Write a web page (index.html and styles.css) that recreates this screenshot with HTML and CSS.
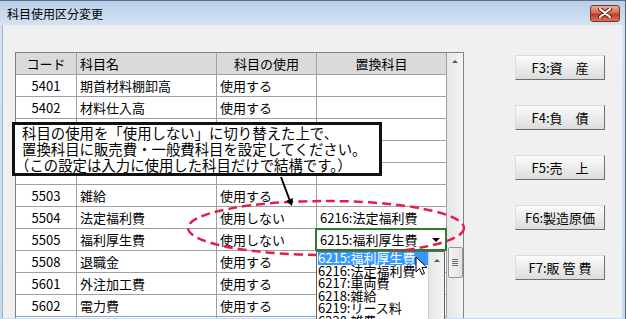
FILE: index.html
```html
<!DOCTYPE html>
<html lang="ja">

<head>
    <meta charset="UTF-8">
    <meta name="viewport" content="width=device-width, initial-scale=1.0">
    <title>科目使用区分変更</title>
    <link rel="stylesheet" href="styles.css">
</head>

<body>
    <div class="window">
        <div class="titlebar">
            <span class="title">科目使用区分変更</span>
            <div class="close-btn">
                <svg width="14" height="10" viewBox="0 0 14 10">
                    <path d="M2 1 L12 9 M12 1 L2 9" stroke="#5a1c12" stroke-width="4" stroke-linecap="round" />
                    <path d="M2 1 L12 9 M12 1 L2 9" stroke="#fff" stroke-width="2.2" stroke-linecap="round" />
                </svg>
            </div>
        </div>

        <div class="client">
            <div class="grid">
                <div class="grid-body">
                    <div class="row head">
                        <div class="cell center">コード</div>
                        <div class="cell">科目名</div>
                        <div class="cell center">科目の使用</div>
                        <div class="cell center">置換科目</div>
                    </div>
                    <div class="row">
                        <div class="cell center">5401</div>
                        <div class="cell">期首材料棚卸高</div>
                        <div class="cell">使用する</div>
                        <div class="cell"></div>
                    </div>
                    <div class="row">
                        <div class="cell center">5402</div>
                        <div class="cell">材料仕入高</div>
                        <div class="cell">使用する</div>
                        <div class="cell"></div>
                    </div>
                    <!-- 吹き出しの下に隠れる行 -->
                    <div class="row">
                        <div class="cell"></div>
                        <div class="cell"></div>
                        <div class="cell"></div>
                        <div class="cell"></div>
                    </div>
                    <div class="row">
                        <div class="cell"></div>
                        <div class="cell"></div>
                        <div class="cell"></div>
                        <div class="cell"></div>
                    </div>
                    <div class="row">
                        <div class="cell"></div>
                        <div class="cell"></div>
                        <div class="cell"></div>
                        <div class="cell"></div>
                    </div>
                    <div class="row">
                        <div class="cell center">5503</div>
                        <div class="cell">雑給</div>
                        <div class="cell">使用する</div>
                        <div class="cell"></div>
                    </div>
                    <div class="row">
                        <div class="cell center">5504</div>
                        <div class="cell">法定福利費</div>
                        <div class="cell">使用しない</div>
                        <div class="cell">6216:法定福利費</div>
                    </div>
                    <div class="row">
                        <div class="cell center">5505</div>
                        <div class="cell">福利厚生費</div>
                        <div class="cell">使用しない</div>
                        <div class="cell edit-cell">
                            <div class="combo">
                                <span class="combo-text">6215:福利厚生費</span>
                                <span class="combo-btn"><span class="tri-down"></span></span>
                            </div>
                        </div>
                    </div>
                    <div class="row">
                        <div class="cell center">5508</div>
                        <div class="cell">退職金</div>
                        <div class="cell">使用する</div>
                        <div class="cell"></div>
                    </div>
                    <div class="row">
                        <div class="cell center">5601</div>
                        <div class="cell">外注加工費</div>
                        <div class="cell">使用する</div>
                        <div class="cell"></div>
                    </div>
                    <div class="row">
                        <div class="cell center">5602</div>
                        <div class="cell">電力費</div>
                        <div class="cell">使用する</div>
                        <div class="cell"></div>
                    </div>
                    <div class="row last">
                        <div class="cell"></div>
                        <div class="cell"></div>
                        <div class="cell"></div>
                        <div class="cell"></div>
                    </div>
                </div>

                <div class="vscroll">
                    <div class="scroll-arrow"><span class="tri-up"></span></div>
                    <div class="thumb">
                        <span></span><span></span><span></span><span></span>
                    </div>
                </div>
            </div>

            <div class="fkeys">
                <div class="fkey">F3:資　産</div>
                <div class="fkey">F4:負　債</div>
                <div class="fkey">F5:売　上</div>
                <div class="fkey">F6:製造原価</div>
                <div class="fkey">F7:販 管 費</div>
            </div>
        </div>

        <!-- 説明の吹き出し -->
        <div class="callout">
            <div>科目の使用を「使用しない」に切り替えた上で、</div>
            <div>置換科目に販売費・一般費科目を設定してください。</div>
            <div class="paren">（この設定は入力に使用した科目だけで結構です。）</div>
        </div>

        <svg class="marks" width="626" height="319" viewBox="0 0 626 319">
            <ellipse cx="326" cy="227" rx="138" ry="27" fill="none" stroke="#e41e4c" stroke-width="2.5"
                stroke-dasharray="9 5" />
            <line x1="281" y1="176" x2="290" y2="200" stroke="#000" stroke-width="2" />
            <polygon points="292,205 293,197 286,200" fill="#000" />
        </svg>

        <!-- ドロップダウン -->
        <div class="droplist">
            <ul class="items">
                <li class="selected">6215:福利厚生費</li>
                <li>6216:法定福利費</li>
                <li>6217:車両費</li>
                <li>6218:雑給</li>
                <li>6219:リース料</li>
                <li>6220:雑費</li>
            </ul>
            <div class="list-scroll"><span class="tri-up"></span></div>
        </div>

        <svg class="cursor" width="13" height="21" viewBox="0 0 13 21">
            <path d="M1 1 L1 16 L4.5 12.5 L7 18.5 L9.5 17.5 L7 11.5 L12 11.5 Z" fill="#fff" stroke="#000"
                stroke-width="1" stroke-linejoin="round" />
        </svg>
    </div>
</body>

</html>
```

FILE: styles.css
```css
* {
    box-sizing: border-box;
}

body {
    margin: 0;
    width: 626px;
    height: 319px;
    overflow: hidden;
    font-family: "Noto Sans CJK JP", "Noto Sans", sans-serif;
    font-size: 13px;
    color: #000;
}

.window {
    position: relative;
    width: 626px;
    height: 319px;
    overflow: hidden;
    background: linear-gradient(#b9cfe9, #d5e3f3 25px, #c8daee);
    border-top: 1px solid #5d6f86;
    border-right: 1px solid #4f637c;
    padding: 0 3px 0 2px;
}

.titlebar {
    height: 24px;
    display: flex;
    align-items: center;
    padding-left: 5px;
}

.title {
    font-size: 12px;
}

.close-btn {
    margin-left: auto;
    margin-right: 2px;
    width: 30px;
    height: 17px;
    border: 1px solid #7a3428;
    border-radius: 3px;
    background: linear-gradient(#eaa99a, #d66a55 45%, #c13c24 55%, #d8735c);
    display: flex;
    justify-content: center;
    align-items: center;
}

.client {
    height: 293px;
    overflow: hidden;
    background-color: #f0f0f0;
    border-left: 1px solid #a3b3c6;
    padding: 27px 0 0 12px;
    display: flex;
    align-items: flex-start;
}

/* 一覧 */
.grid {
    display: flex;
    border: 1px solid #828282;
    border-bottom: none;
    background-color: #fff;
}

.row {
    display: grid;
    grid-template-columns: 61px 140px 100px 130px;
    height: 22px;
    border-bottom: 1px solid #a0a0a0;
}

.row.last {
    height: 3px;
    border-bottom: none;
}

.cell {
    border-right: 1px solid #a0a0a0;
    padding-left: 3px;
    line-height: 21px;
    white-space: nowrap;
    overflow: hidden;
}

.center {
    text-align: center;
    padding-left: 0;
}

.head {
    background-color: #dadada;
}

.edit-cell {
    position: relative;
    overflow: visible;
}

.combo {
    position: absolute;
    top: -1px;
    left: -2px;
    right: -1px;
    bottom: -1px;
    border: 2px solid #2d7a32;
    background-color: #fff;
    display: flex;
    align-items: center;
    padding-left: 3px;
    z-index: 1;
}

.combo-text {
    line-height: 18px;
}

.combo-btn {
    margin-left: auto;
    margin-right: 2px;
    width: 14px;
    height: 14px;
    display: flex;
    justify-content: center;
    align-items: center;
}

.tri-down {
    width: 0;
    height: 0;
    border-left: 4px solid transparent;
    border-right: 4px solid transparent;
    border-top: 4px solid #000;
}

.tri-up {
    width: 0;
    height: 0;
    border-left: 3px solid transparent;
    border-right: 3px solid transparent;
    border-bottom: 3px solid #5a5a5a;
}

.vscroll {
    width: 16px;
    height: 266px;
    background: linear-gradient(90deg, #e6e6e6, #f3f3f3);
    display: flex;
    flex-direction: column;
    align-items: center;
}

.scroll-arrow {
    width: 16px;
    height: 17px;
    display: flex;
    justify-content: center;
    align-items: center;
}

.thumb {
    margin-top: 177px;
    width: 15px;
    height: 31px;
    border: 1px solid #979797;
    border-radius: 2px;
    background: linear-gradient(90deg, #f4f4f4, #e2e2e2);
    display: flex;
    flex-direction: column;
    align-items: center;
    justify-content: center;
    gap: 1px;
}

.thumb span {
    width: 6px;
    height: 1px;
    background-color: #6a6a6a;
}

/* ファンクションキー */
.fkeys {
    margin-left: 51px;
    padding-top: 3px;
    display: flex;
    flex-direction: column;
    gap: 25px;
}

.fkey {
    width: 90px;
    height: 25px;
    border: 1px solid;
    border-color: #dcdcdc #6e6e6e #6e6e6e #dcdcdc;
    background: linear-gradient(#fbfbfb, #ececec 50%, #dcdcdc);
    display: flex;
    justify-content: center;
    align-items: center;
    font-size: 13px;
}

/* 吹き出しと注記 */
.callout {
    position: absolute;
    left: 12px;
    top: 121px;
    width: 370px;
    height: 54px;
    border: 3px solid #111;
    background-color: #fff;
    padding-left: 7px;
    font-size: 14.4px;
    line-height: 16px;
    white-space: nowrap;
    z-index: 2;
}

.callout .paren {
    margin-left: -7px;
}

.marks {
    position: absolute;
    left: 0;
    top: 0;
    z-index: 3;
}

.droplist {
    position: absolute;
    left: 316px;
    top: 250px;
    width: 129px;
    height: 69px;
    overflow: hidden;
    border: 1px solid #646464;
    border-bottom: none;
    background-color: #fff;
    display: flex;
    z-index: 4;
}

.items {
    list-style: none;
    margin: 0;
    padding: 0 0 0 1px;
    width: 111px;
}

.items li {
    height: 12.5px;
    line-height: 12.5px;
    white-space: nowrap;
}

.items .selected {
    background-color: #3399ff;
    color: #fff;
}

.list-scroll {
    width: 16px;
    background: linear-gradient(90deg, #e6e6e6, #f3f3f3);
    border-left: 1px solid #d0d0d0;
    display: flex;
    justify-content: center;
    padding-top: 7px;
}

.cursor {
    position: absolute;
    left: 415px;
    top: 255px;
    z-index: 5;
}
```
